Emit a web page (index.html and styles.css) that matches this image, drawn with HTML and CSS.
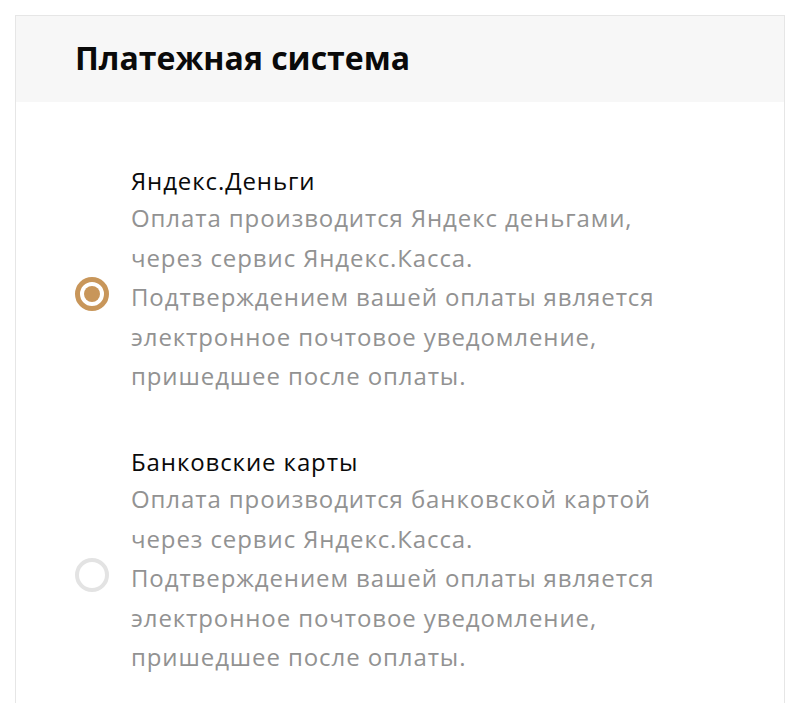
FILE: index.html
```html
<!DOCTYPE html>
<html lang="ru">
<head>
<meta charset="utf-8">
<link rel="stylesheet" href="styles.css">
</head>
<body>
<div class="card">
  <div class="card-head">
    <h2 class="card-title">Платежная система</h2>
  </div>
  <div class="card-body">
    <label class="option">
      <span class="radio radio-checked"><span class="radio-dot"></span></span>
      <span class="option-text">
        <span class="option-title">Яндекс.Деньги</span>
        <span class="option-desc">Оплата производится Яндекс деньгами,<br>через сервис Яндекс.Касса.<br>Подтверждением вашей оплаты является<br>электронное почтовое уведомление,<br>пришедшее после оплаты.</span>
      </span>
    </label>
    <label class="option">
      <span class="radio"></span>
      <span class="option-text">
        <span class="option-title">Банковские карты</span>
        <span class="option-desc">Оплата производится банковской картой<br>через сервис Яндекс.Касса.<br>Подтверждением вашей оплаты является<br>электронное почтовое уведомление,<br>пришедшее после оплаты.</span>
      </span>
    </label>
  </div>
</div>
</body>
</html>
```
FILE: styles.css
```css
html, body {
  margin: 0;
  padding: 0;
  background: #ffffff;
}
body {
  font-family: "Open Sans", "Noto Sans", sans-serif;
  overflow: hidden;
  height: 703px;
}
.card {
  margin: 15px 15px 0 15px;
  border: 1px solid #e6e6e6;
  border-bottom: none;
  height: 720px;
  box-sizing: border-box;
}
.card-head {
  background: #f7f7f7;
  height: 86px;
  display: flex;
  align-items: center;
  padding-left: 59px;
}
.card-title {
  margin: 0;
  font-size: 32px;
  font-weight: 700;
  color: #0a0a0a;
  line-height: 1;
  margin-top: -2px;
}
.card-body {
  padding: 62px 0 0 59px;
  display: flex;
  flex-direction: column;
  gap: 49px;
}
.option {
  display: flex;
  align-items: center;
  gap: 22px;
}
.radio {
  width: 34px;
  height: 34px;
  box-sizing: border-box;
  border-radius: 50%;
  border: 4px solid #e3e3e3;
  flex: none;
  margin-top: 28px;
  display: flex;
  align-items: center;
  justify-content: center;
}
.radio-checked {
  border: 5px solid #c8965a;
}
.radio-dot {
  width: 16px;
  height: 16px;
  border-radius: 50%;
  background: #c8965a;
}
.option-text {
  display: flex;
  flex-direction: column;
}
.option-title {
  font-size: 24px;
  letter-spacing: 0.9px;
  line-height: 34px;
  color: #0a0a0a;
}
.option-desc {
  font-size: 24px;
  letter-spacing: 0.9px;
  line-height: 39.6px;
  color: #929292;
}
```
